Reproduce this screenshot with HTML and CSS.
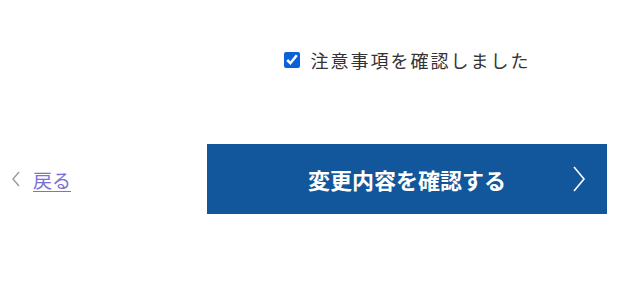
FILE: index.html
```html
<!DOCTYPE html>
<html lang="ja">
<head>
    <meta charset="utf-8">
    <title>変更内容の確認</title>
    <link rel="stylesheet" href="styles.css">
</head>
<body>
<form class="confirm">
    <div class="agree">
        <label class="agree-label">
            <input type="checkbox" class="agree-check" checked>
            <span>注意事項を確認しました</span>
        </label>
    </div>

    <div class="back">
        <span class="back-arrow">
            <svg width="10" height="16" viewBox="0 0 10 16"><path d="M8 1 L2 8 L8 15" fill="none" stroke="#9a9a9a" stroke-width="1.4"/></svg>
        </span>
        <a href="#" class="back-link">戻る</a>
    </div>

    <button type="button" class="submit">
        <span class="submit-text">変更内容を確認する</span>
        <svg class="submit-arrow" width="14" height="26" viewBox="0 0 14 26"><path d="M2 1 L12 13 L2 25" fill="none" stroke="#ffffff" stroke-width="1.6"/></svg>
    </button>
</form>
</body>
</html>
```

FILE: styles.css
```css
body{
    margin: 0;
    background-color: #ffffff;
    font-family: "Noto Sans CJK JP", "Noto Sans", sans-serif;
    color: #333333;
}

.confirm{
    display: grid;
    grid-template-columns: 207px 400px;
    grid-template-rows: auto auto;
    padding-top: 45px;
}

.agree{
    grid-column: 2;
    grid-row: 1;
    display: flex;
    justify-content: center;
    height: 30px;
    margin-bottom: 69px;
}

.agree-label{
    display: flex;
    align-items: center;
    gap: 11px;
    font-size: 18px;
    letter-spacing: 2px;
    cursor: pointer;
}

.agree-check{
    width: 16px;
    height: 16px;
    margin: 0;
    accent-color: #0b62d6;
}

.back{
    grid-column: 1;
    grid-row: 2;
    display: flex;
    align-items: center;
    gap: 12px;
    padding-left: 11px;
}

.back-arrow{
    display: flex;
}

.back-link{
    font-size: 19px;
    color: #7a70d8;
    text-decoration: underline;
    text-underline-offset: 3px;
}

.submit{
    grid-column: 2;
    grid-row: 2;
    position: relative;
    height: 70px;
    padding-bottom: 2px;
    border: none;
    background-color: #12579b;
    color: #ffffff;
    font-family: inherit;
    font-size: 22px;
    font-weight: bold;
    cursor: pointer;
}

.submit-arrow{
    position: absolute;
    right: 21px;
    top: 22px;
}
```
